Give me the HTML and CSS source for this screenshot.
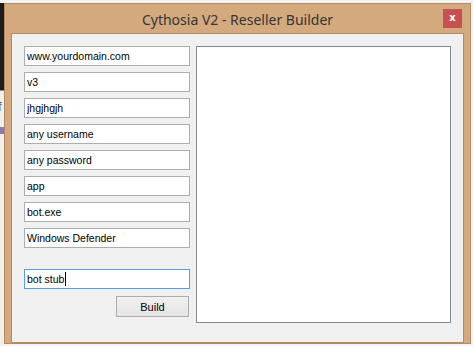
FILE: index.html
```html
<!DOCTYPE html>
<html lang="en">
<head>
	<meta charset="UTF-8">
	<title>Cythosia V2 - Reseller Builder</title>
	<link rel="stylesheet" href="styles.css">
</head>
<body>
	<div class="top-strip"></div>
	<div class="desk">
		<div class="side-strip">
			<div class="side-dark"></div>
			<div class="side-light">
				<span class="side-f">f</span>
				<span class="side-tag"></span>
			</div>
		</div>
		<div class="window">
			<div class="titlebar">
				<span class="title">Cythosia V2 - Reseller Builder</span>
				<span class="close">x</span>
			</div>
			<div class="client">
				<div class="fields">
					<input type="text" class="box" value="www.yourdomain.com">
					<input type="text" class="box" value="v3">
					<input type="text" class="box" value="jhgjhgjh">
					<input type="text" class="box" value="any username">
					<input type="text" class="box" value="any password">
					<input type="text" class="box" value="app">
					<input type="text" class="box" value="bot.exe">
					<input type="text" class="box" value="Windows Defender">
					<div class="box focus">bot stub<span class="caret"></span></div>
					<div class="actions">
						<button class="btn">Build</button>
					</div>
				</div>
				<div class="output"></div>
			</div>
		</div>
	</div>
</body>
</html>
```

FILE: styles.css
```css
html,
body {
	margin: 0;
	padding: 0;
	background: #f4f4f4;
	height: 346px;
	overflow: hidden;
}
.top-strip {
	height: 3px;
	background: #f2f2f2;
}
.desk {
	display: flex;
}
.side-strip {
	width: 4px;
	display: flex;
	flex-direction: column;
}
.side-dark {
	height: 87px;
	background: #1c1c1c;
	border-bottom: 1px solid #8a8a8a;
}
.side-light {
	height: 254px;
	background: #f1efe9;
	overflow: hidden;
	position: relative;
}
.side-f {
	position: absolute;
	left: -2px;
	top: 8px;
	font: 13px "Liberation Sans", sans-serif;
	color: #5a5a7a;
}
.side-tag {
	position: absolute;
	left: 0;
	top: 36px;
	width: 4px;
	height: 7px;
	background: #8c7ab8;
}
.window {
	width: 465px;
	height: 339px;
	background: #d4a97e;
	border: 1px solid #b48b63;
	display: flex;
	flex-direction: column;
}
.titlebar {
	height: 29px;
	position: relative;
	display: flex;
	justify-content: center;
}
.title {
	font: 14px "Noto Sans", "Open Sans", sans-serif;
	color: #353535;
	line-height: 29px;
	padding-top: 1px;
}
.close {
	position: absolute;
	right: 8px;
	top: 5px;
	width: 19px;
	height: 19px;
	background: #c75050;
	color: #fff;
	font: bold 10px/18px "DejaVu Sans", sans-serif;
	text-align: center;
}
.client {
	margin: 0 6px;
	height: 302px;
	background: #f0f0f0;
	border: 1px solid #b08d68;
	display: flex;
	padding: 12px 11px 0 12px;
	gap: 6px;
}
.fields {
	width: 166px;
	display: flex;
	flex-direction: column;
	gap: 6px;
}
.box {
	box-sizing: border-box;
	margin: 0;
	width: 166px;
	height: 20px;
	border: 1px solid #abadb3;
	background: #fff;
	padding: 0 2px;
	font: 10.5px/18px "Liberation Sans", Arial, sans-serif;
	color: #000;
	outline: none;
}
.focus {
	margin-top: 15px;
	border-color: #569de5;
	display: flex;
	align-items: center;
}
.caret {
	display: inline-block;
	width: 1px;
	height: 14px;
	background: #000;
	margin-left: 1px;
}
.actions {
	display: flex;
	justify-content: flex-end;
	padding-top: 1px;
	padding-right: 1px;
}
.btn {
	width: 73px;
	height: 21px;
	margin: 0;
	padding: 0;
	border: 1px solid #acacac;
	background: linear-gradient(#f0f0f0, #e5e5e5);
	font: 11px "Liberation Sans", Arial, sans-serif;
	color: #000;
}
.output {
	box-sizing: border-box;
	width: 255px;
	height: 277px;
	background: #fff;
	border: 1px solid #828790;
}
```
